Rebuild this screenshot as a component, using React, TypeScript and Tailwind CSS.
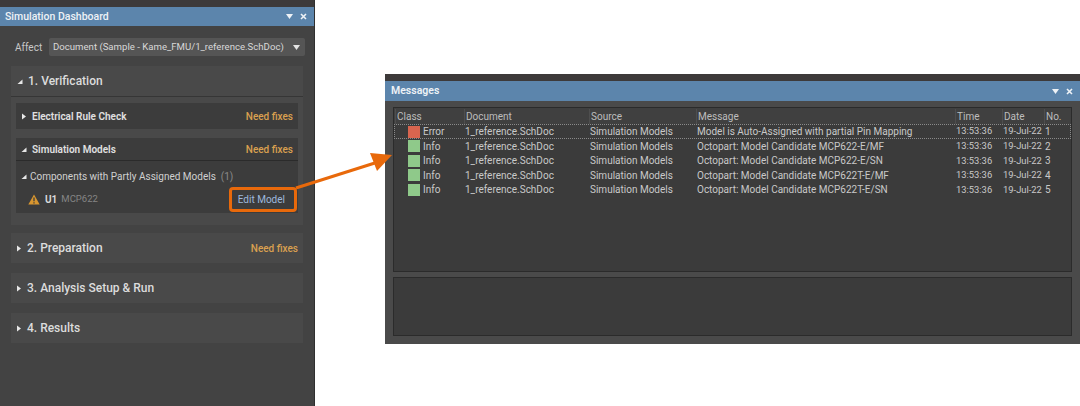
import React from 'react';

const rows = [
  ['Error', 'Model is Auto-Assigned with partial Pin Mapping', '1'],
  ['Info', 'Octopart: Model Candidate MCP622-E/MF', '2'],
  ['Info', 'Octopart: Model Candidate MCP622-E/SN', '3'],
  ['Info', 'Octopart: Model Candidate MCP622T-E/MF', '4'],
  ['Info', 'Octopart: Model Candidate MCP622T-E/SN', '5'],
];

const Caret: React.FC<{ open?: boolean }> = ({ open }) => (
  <svg width="6" height="7" viewBox="0 0 6 7" className="shrink-0 text-[#e8e8e8]">
    {open ? <path d="M5.5 1.5V6H0.5Z" fill="currentColor" /> : <path d="M1 0.5L5 3.5L1 6.5Z" fill="currentColor" />}
  </svg>
);

const TitleButtons = () => (
  <div className="flex items-center gap-[7px]">
    <svg width="7" height="5" viewBox="0 0 7 5"><path d="M0 0H7L3.5 5Z" fill="#eef2f6" /></svg>
    <svg width="7" height="7" viewBox="0 0 7 7"><path d="M1 1L6 6M6 1L1 6" stroke="#eef2f6" strokeWidth="1.6" /></svg>
  </div>
);

const Section: React.FC<{ title: string; fixes?: boolean; first?: boolean }> = ({ title, fixes, first }) => (
  <div className={`mx-[11px] flex h-[30px] items-center bg-[#494949] pl-[5px] pr-[5px] ${first ? 'mt-[8px]' : 'mt-[10px]'}`}>
    <Caret />
    <span className="ml-[5px] text-[12px] font-medium text-[#dcdcdc]">{title}</span>
    {fixes && <span className="ml-auto text-[10px] font-medium text-[#d9a050]">Need fixes</span>}
  </div>
);

const App: React.FC = () => {
  return (
    <div className="relative flex h-[406px] w-[1080px] overflow-hidden whitespace-nowrap bg-white font-['Roboto',sans-serif] text-[10px]">
      {/* Simulation Dashboard panel */}
      <div className="flex h-full w-[315px] shrink-0 flex-col border-r border-[#2f2f2f] bg-[#434343]">
        <div className="h-[7px] bg-[#3d3a3a]" />
        <div className="flex h-[19px] items-center justify-between bg-[#5c85ac] pl-[5px] pr-[7px] text-[10.5px] font-medium text-[#eef2f6]">
          <span>Simulation Dashboard</span>
          <TitleButtons />
        </div>

        <div className="mt-[12px] flex h-[18px] items-center pl-[15px] pr-[9px] text-[#c8c8c8]">
          <span className="w-[34px] shrink-0">Affect</span>
          <div className="flex h-[18px] flex-1 items-center justify-between rounded-[2px] bg-[#555555] pl-[4px] pr-[5px] text-[9.6px] text-[#d8d8d8]">
            <span>Document (Sample - Kame_FMU/1_reference.SchDoc)</span>
            <svg width="7" height="5" viewBox="0 0 7 5"><path d="M0 0H7L3.5 5Z" fill="#e4e4e4" /></svg>
          </div>
        </div>

        {/* 1. Verification */}
        <div className="mx-[11px] mt-[10px] h-[159px] bg-[#494949]">
          <div className="flex h-[31px] items-center border-b border-[#363636] pl-[6px]">
            <Caret open />
            <span className="ml-[5px] text-[12px] font-medium text-[#dcdcdc]">1. Verification</span>
          </div>
          <div className="mx-[5px] mt-[6px] flex h-[26px] items-center bg-[#3c3c3c] pl-[5px] pr-[5px]">
            <Caret />
            <span className="ml-[5px] font-semibold text-[#e0e0e0]">Electrical Rule Check</span>
            <span className="ml-auto font-medium text-[#d9a050]">Need fixes</span>
          </div>
          <div className="mx-[5px] mt-[9px] h-[75px] bg-[#3c3c3c]">
            <div className="flex h-[23px] items-center border-b border-[#2b2b2b] pl-[5px] pr-[5px]">
              <Caret open />
              <span className="ml-[5px] font-semibold text-[#e0e0e0]">Simulation Models</span>
              <span className="ml-auto font-medium text-[#d9a050]">Need fixes</span>
            </div>
            <div className="mt-[7px] flex h-[16px] items-center pl-[5px] text-[#d0d0d0]">
              <Caret open />
              <span className="ml-[3px]">Components with Partly Assigned Models</span>
              <span className="ml-[5px] text-[#8a8a8a]">(1)</span>
            </div>
            <div className="mt-[3px] flex h-[24px] items-center pl-[12px]">
              <svg width="12" height="11" viewBox="0 0 12 11">
                <path d="M6 0.5L11.7 10.5H0.3Z" fill="#d9962f" />
                <path d="M6 3.5V7.2M6 8.2V9.4" stroke="#3c3c3c" strokeWidth="1.3" />
              </svg>
              <span className="ml-[5px] font-bold text-[#d8d8d8]">U1</span>
              <span className="ml-[4px] text-[9.5px] text-[#858585]">MCP622</span>
              <span className="ml-auto mr-[13px] text-[#9db8dc]">Edit Model</span>
            </div>
          </div>
        </div>

        <Section title="2. Preparation" fixes first />
        <Section title="3. Analysis Setup & Run" />
        <Section title="4. Results" />
      </div>

      {/* Messages panel */}
      <div className="ml-[70px] mt-[74px] flex h-[270px] w-[695px] shrink-0 flex-col bg-[#4a4a4a]">
        <div className="h-[7px] bg-[#3d3a3a]" />
        <div className="flex h-[20px] items-center justify-between bg-[#5c85ac] pl-[6px] pr-[7px] text-[10.5px] font-semibold text-[#eef2f6]">
          <span>Messages</span>
          <TitleButtons />
        </div>
        <div className="mx-[8px] mt-[6px] h-[165px] border border-[#2b2b2b] bg-[#3b3b3b] text-[#c9c9c9]">
          <div className="grid h-[16px] grid-cols-[69px_125px_107px_259px_47px_42px_1fr] items-center bg-[#404040] pl-[1px] pt-[1px] text-[#bdbdbd]">
            {['Class', 'Document', 'Source', 'Message', 'Time', 'Date', 'No.'].map((h) => (
              <span key={h} className="border-l border-[#4e4e4e] pl-[1px]">{h}</span>
            ))}
          </div>
          {rows.map(([cls, msg, no], i) => (
            <div
              key={no}
              className={`grid h-[14.6px] grid-cols-[69px_125px_107px_259px_47px_42px_1fr] items-center pl-[1px] ${i === 0 ? 'outline-1 -outline-offset-1 outline-dotted outline-[#8a8a8a]' : ''}`}
            >
              <span className="flex items-center pl-[13px]">
                <span className={`mr-[3px] h-[12px] w-[12px] ${i === 0 ? 'bg-[#d9654f]' : 'bg-[#8fc98a]'}`} />
                {cls}
              </span>
              <span className="pl-[1px]">1_reference.SchDoc</span>
              <span className="pl-[1px]">Simulation Models</span>
              <span className="pl-[1px]">{msg}</span>
              <span className="pl-[1px] text-[9.4px]">13:53:36</span>
              <span className="pl-[1px] text-[9.4px]">19-Jul-22</span>
              <span className="pl-[1px]">{no}</span>
            </div>
          ))}
        </div>
        <div className="mx-[8px] mt-[5px] h-[59px] border border-[#2b2b2b] bg-[#3b3b3b]" />
      </div>

      {/* Callout over both panels */}
      <div className="absolute left-[229px] top-[187px] h-[25px] w-[68px] rounded-[4px] border-[3px] border-[#e8690b]" />
      <svg className="absolute left-0 top-0" width="1080" height="406" viewBox="0 0 1080 406">
        <path d="M296 188L378 162" stroke="#e8690b" strokeWidth="3" fill="none" />
        <path d="M392 155L370 153L377 171Z" fill="#e8690b" />
      </svg>
    </div>
  );
};

export default App;
